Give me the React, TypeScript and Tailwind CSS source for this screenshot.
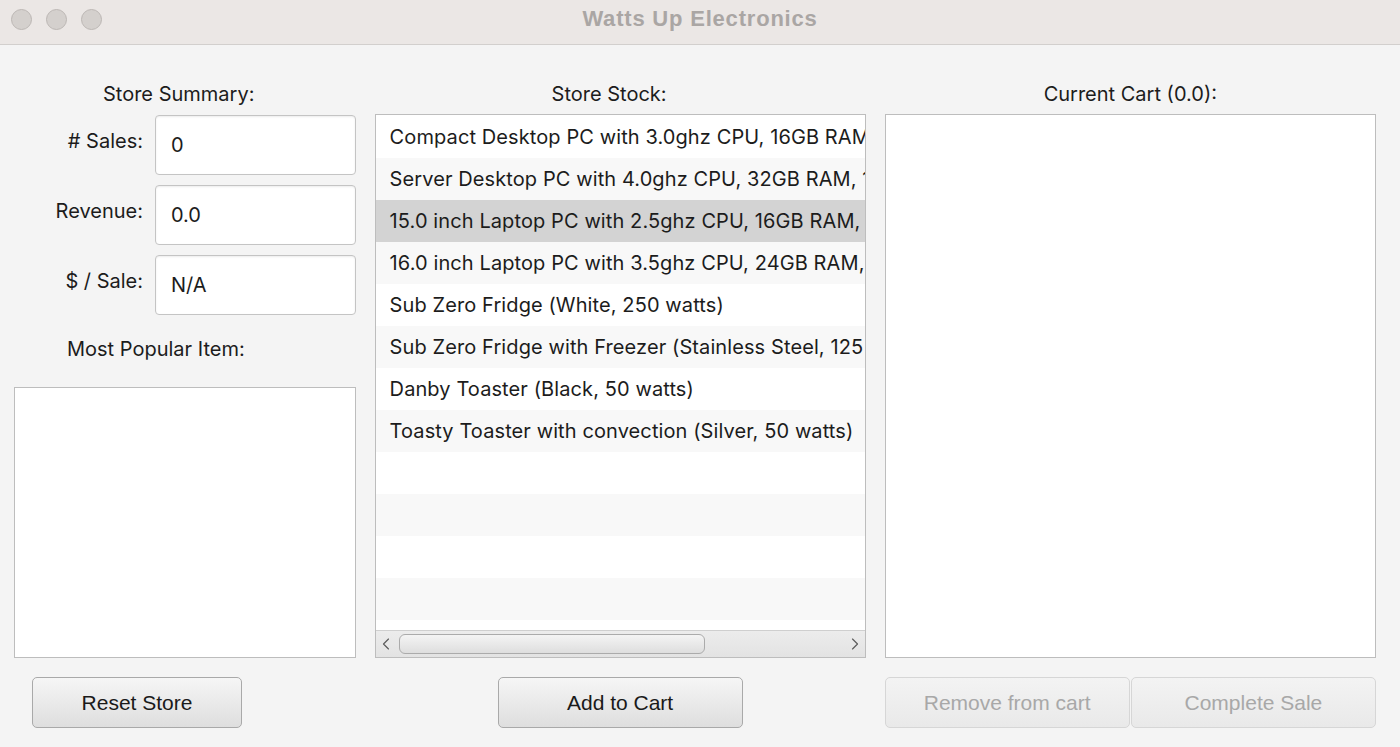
import { ChevronLeft, ChevronRight } from 'lucide-react';

const stock = [
  'Compact Desktop PC with 3.0ghz CPU, 16GB RAM, 512GB SSD',
  'Server Desktop PC with 4.0ghz CPU, 32GB RAM, 1TB SSD',
  '15.0 inch Laptop PC with 2.5ghz CPU, 16GB RAM, 256GB SSD',
  '16.0 inch Laptop PC with 3.5ghz CPU, 24GB RAM, 512GB SSD',
  'Sub Zero Fridge (White, 250 watts)',
  'Sub Zero Fridge with Freezer (Stainless Steel, 125 watts)',
  'Danby Toaster (Black, 50 watts)',
  'Toasty Toaster with convection (Silver, 50 watts)',
  '',
  '',
  '',
  '',
  '',
];

const selected = 2;

function Field({ label, value }: { label: string; value: string }) {
  return (
    <div className="flex items-center h-[60px]">
      <div className="w-[141px] pr-[12px] pb-[8px] text-right text-[20px] text-[#1c1c1c]">{label}</div>
      <div className="flex-1 h-full flex items-center pl-[15px] bg-white border border-[#c4c4c4] rounded-[4px] shadow-[inset_0_1px_2px_rgba(0,0,0,0.08)] text-[20px] text-[#1c1c1c]">
        {value}
      </div>
    </div>
  );
}

function Button({ label, disabled, className }: { label: string; disabled?: boolean; className?: string }) {
  return (
    <button
      className={`h-[51px] rounded-[5px] border text-[21px] font-['Liberation_Sans',Arial,sans-serif] ${
        disabled
          ? 'border-[#d6d6d6] bg-gradient-to-b from-[#f3f3f3] to-[#e9e9e9] text-[#a8a8a8]'
          : 'border-[#a9a9a9] bg-gradient-to-b from-[#f6f6f6] to-[#dedede] text-[#1a1a1a]'
      } ${className ?? ''}`}
    >
      {label}
    </button>
  );
}

export default function App() {
  return (
    <div className="w-[1400px] h-[747px] bg-[#f4f4f4] flex flex-col font-['Inter','Noto_Sans',sans-serif] overflow-hidden">
      {/* title bar */}
      <div className="relative h-[45px] shrink-0 bg-[#ebe7e5] border-b border-[#d2cfcd] flex items-center justify-center">
        <div className="absolute left-[11px] top-[9px] flex gap-[14px]">
          <div className="w-[21px] h-[21px] rounded-full bg-[#d4d0cd] border border-[#bcb7b4]" />
          <div className="w-[21px] h-[21px] rounded-full bg-[#d4d0cd] border border-[#bcb7b4]" />
          <div className="w-[21px] h-[21px] rounded-full bg-[#d4d0cd] border border-[#bcb7b4]" />
        </div>
        <span className="text-[22px] tracking-[0.8px] font-bold text-[#aaa6a4] font-['Liberation_Sans',Arial,sans-serif] -mt-[8px]">
          Watts Up Electronics
        </span>
      </div>

      <div className="flex pt-[37px] pl-[14px] pr-[24px] gap-[19px]">
        {/* left column */}
        <div className="w-[342px] flex flex-col">
          <div className="h-[24px] leading-[24px] text-[20px] text-[#1c1c1c] pl-[89px]">Store Summary:</div>
          <div className="mt-[9px] flex flex-col gap-[10px]">
            <Field label="# Sales:" value="0" />
            <Field label="Revenue:" value="0.0" />
            <Field label="$ / Sale:" value="N/A" />
          </div>
          <div className="mt-[22px] h-[24px] leading-[24px] text-[20px] text-[#1c1c1c] pl-[53px]">Most Popular Item:</div>
          <div className="mt-[26px] h-[271px] bg-white border border-[#bdbdbd]" />
          <div className="mt-[19px] pl-[18px]">
            <Button label="Reset Store" className="w-[210px]" />
          </div>
        </div>

        {/* middle column */}
        <div className="w-[491px] flex flex-col">
          <div className="h-[24px] leading-[24px] text-[20px] text-[#1c1c1c] text-center pr-[22px]">Store Stock:</div>
          <div className="mt-[8px] h-[544px] border border-[#bdbdbd] bg-white flex flex-col overflow-hidden">
            <div className="flex-1 overflow-hidden pt-[1px]">
              {stock.map((s, i) => (
                <div
                  key={i}
                  className={`h-[42px] flex items-center pl-[14px] whitespace-nowrap overflow-hidden text-[20px] tracking-[0.1px] text-[#1c1c1c] ${
                    i === selected ? 'bg-[#d3d3d3]' : i % 2 === 1 ? 'bg-[#f8f8f8]' : 'bg-white'
                  }`}
                >
                  {s}
                </div>
              ))}
            </div>
            <div className="h-[27px] shrink-0 border-t border-[#cfcfcf] bg-gradient-to-b from-[#ececec] to-[#e3e3e3] flex items-center">
              <ChevronLeft className="w-[20px] h-[20px] text-[#5c5c5c]" strokeWidth={1.4} />
              <div className="ml-[3px] w-[306px] h-[20px] rounded-[6px] border border-[#ababab] bg-gradient-to-b from-[#f4f4f4] to-[#dedede]" />
              <div className="flex-1" />
              <ChevronRight className="w-[20px] h-[20px] text-[#5c5c5c]" strokeWidth={1.4} />
            </div>
          </div>
          <div className="mt-[19px] flex justify-center">
            <Button label="Add to Cart" className="w-[245px]" />
          </div>
        </div>

        {/* right column */}
        <div className="w-[492px] flex flex-col">
          <div className="h-[24px] leading-[24px] text-[20px] text-[#1c1c1c] text-center">Current Cart (0.0):</div>
          <div className="mt-[8px] h-[544px] border border-[#bdbdbd] bg-white" />
          <div className="mt-[19px] flex gap-[1px]">
            <Button label="Remove from cart" disabled className="flex-1" />
            <Button label="Complete Sale" disabled className="flex-1" />
          </div>
        </div>
      </div>
    </div>
  );
}
